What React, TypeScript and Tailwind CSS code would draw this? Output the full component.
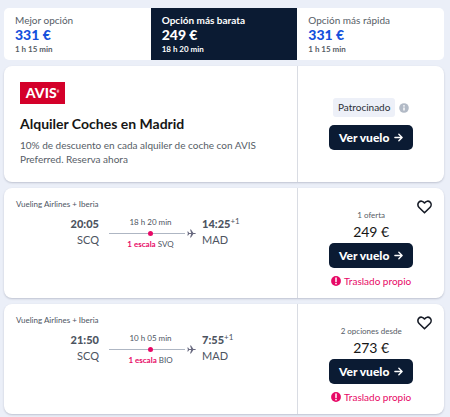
import React from 'react';

type Option = { label: string; price: string; duration: string; active?: boolean };

type Flight = {
  id: number;
  airlines: string;
  departure: string;
  origin: string;
  duration: string;
  stop: string;
  arrival: string;
  destination: string;
  offers: string;
  price: string;
};

const options: Option[] = [
  { label: 'Mejor opción', price: '331 €', duration: '1 h 15 min' },
  { label: 'Opción más barata', price: '249 €', duration: '18 h 20 min', active: true },
  { label: 'Opción más rápida', price: '331 €', duration: '1 h 15 min' },
];

const flights: Flight[] = [
  {
    id: 1,
    airlines: 'Vueling Airlines + Iberia',
    departure: '20:05',
    origin: 'SCQ',
    duration: '18 h 20 min',
    stop: 'SVQ',
    arrival: '14:25',
    destination: 'MAD',
    offers: '1 oferta',
    price: '249 €',
  },
  {
    id: 2,
    airlines: 'Vueling Airlines + Iberia',
    departure: '21:50',
    origin: 'SCQ',
    duration: '10 h 05 min',
    stop: 'BIO',
    arrival: '7:55',
    destination: 'MAD',
    offers: '2 opciones desde',
    price: '273 €',
  },
];

const ArrowIcon = () => (
  <svg className="h-[9px] w-[9px]" viewBox="0 0 10 10" fill="none" stroke="currentColor" strokeWidth="1.5" strokeLinecap="round" strokeLinejoin="round" aria-hidden="true">
    <path d="M1 5h7.8M5.4 1.4 9 5 5.4 8.6" />
  </svg>
);

const InfoIcon = () => (
  <svg className="block h-[10px] w-[10px]" viewBox="0 0 10 10" aria-hidden="true">
    <circle cx="5" cy="5" r="4.8" fill="#b2bac6" />
    <path d="M5 4.6v2.8" stroke="#fff" strokeWidth="1.4" />
    <circle cx="5" cy="2.9" r=".8" fill="#fff" />
  </svg>
);

const AlertIcon = () => (
  <svg className="h-[10px] w-[10px]" viewBox="0 0 10 10" aria-hidden="true">
    <circle cx="5" cy="5" r="4.9" fill="#e70866" />
    <path d="M5 2.1v3.3" stroke="#fff" strokeWidth="1.5" strokeLinecap="round" />
    <circle cx="5" cy="7.6" r=".85" fill="#fff" />
  </svg>
);

const HeartIcon = () => (
  <svg className="block h-[14px] w-[15px]" viewBox="0 0 15 14" fill="none" stroke="#161b26" strokeWidth="1.6" strokeLinejoin="round" aria-hidden="true">
    <path d="M7.5 12.8 2.1 7.5C.5 5.9.5 3.500 1.900 2.100 3.500.6 6 .9 7.500 3 9 .9 11.500.6 13.100 2.100 14.500 3.500 14.500 5.900 12.900 7.500Z" />
  </svg>
);

const PlaneIcon = () => (
  <svg className="h-[9px] w-[9px] shrink-0" viewBox="0 0 9 9" fill="#68697f" aria-hidden="true">
    <path d="M.3 2.400h.8l1.100 1.500h2L3 .4h1l2.400 3.500h1.700c.9 0 .9 1.200 0 1.200H6.400L4 8.600H3l1.200-3.500h-2L1.100 6.600H.3l.6-2.100Z" />
  </svg>
);

const SelectButton = () => (
  <button type="button" className="flex h-[25px] items-center gap-[5px] rounded-[5px] bg-[#0b1b33] px-2.5 text-[12px] leading-4 font-black text-white">
    Ver vuelo
    <ArrowIcon />
  </button>
);

const Card = ({ children }: { children: React.ReactNode }) => (
  <article className="grid grid-cols-[2fr_1fr] rounded-lg bg-white shadow-[0_1px_2px_rgba(30,40,70,0.22)]">
    {children}
  </article>
);

const SponsoredCard = () => (
  <Card>
    <div className="p-4">
      <div className="flex h-[22px] w-[45px] items-center justify-center bg-[#d4002a] text-[14px] leading-none font-black text-white">
        AVIS<sup className="text-[3px]">®</sup>
      </div>
      <h2 className="mt-3 text-[14px] leading-4 font-bold text-[#161616]">Alquiler Coches en Madrid</h2>
      <p className="mt-1.5 text-[10px] leading-[14px] text-[#565d66]">
        10% de descuento en cada alquiler de coche con AVIS Preferred. Reserva ahora
      </p>
    </div>
    <div className="flex flex-col items-center justify-center gap-2 border-l border-[#d9dce3]">
      <div className="flex items-center gap-1">
        <span className="rounded-[3px] bg-[#edf0f8] px-[5px] text-[10px] leading-[19px] text-[#2b2f36]">Patrocinado</span>
        <button type="button" aria-label="Información">
          <InfoIcon />
        </button>
      </div>
      <SelectButton />
    </div>
  </Card>
);

const FlightCard = ({ flight }: { flight: Flight }) => (
  <Card>
    <div className="px-3 py-2.5 text-[#4d545f]">
      <p className="text-[8px] leading-3">{flight.airlines}</p>
      <div className="mt-1.5 flex">
        <div className="w-[83px] text-right">
          <p className="text-[11px] leading-4 font-black">{flight.departure}</p>
          <p className="text-[11px] leading-4">{flight.origin}</p>
        </div>
        <div className="ml-2.5 w-[87px] text-center">
          <p className="pr-1 text-[8px] leading-[13px]">{flight.duration}</p>
          <div className="flex items-center">
            <div className="h-px flex-1 bg-[#aeb6c3]" />
            <span className="h-[5px] w-[5px] rounded-full bg-[#e70866]" />
            <div className="mr-0.5 h-px w-[32px] bg-[#aeb6c3]" />
            <PlaneIcon />
          </div>
          <p className="pr-1 text-[8px] leading-[13px]">
            <span className="font-bold text-[#e70866]">1 escala</span> {flight.stop}
          </p>
        </div>
        <div className="ml-1.5">
          <p className="text-[11px] leading-4 font-black">
            {flight.arrival}
            <sup className="text-[8px] leading-none font-normal">+1</sup>
          </p>
          <p className="text-[11px] leading-4">{flight.destination}</p>
        </div>
      </div>
    </div>
    <div className="relative flex flex-col items-center border-l border-[#d9dce3] pt-5 pb-2.5">
      <button type="button" aria-label="Guardar vuelo" className="absolute top-3 right-3">
        <HeartIcon />
      </button>
      <p className="text-[8px] leading-[14px] text-[#565d66]">{flight.offers}</p>
      <p className="mb-px text-[14px] leading-5 text-[#161616]">{flight.price}</p>
      <SelectButton />
      <p className="mt-1.5 flex items-center gap-[3px] text-[10px] leading-[14px] text-[#e70866]">
        <AlertIcon />
        Traslado propio
      </p>
    </div>
  </Card>
);

const App = () => (
  <main className="flex min-h-screen flex-col gap-1.5 bg-[#ebeff8] pt-2 pr-1.5 pb-0.5 pl-1 font-[Lato,sans-serif]">
    <nav className="grid grid-cols-3 overflow-hidden rounded-[5px] bg-white">
      {options.map((option) => (
        <button
          key={option.label}
          type="button"
          className={
            option.active
              ? 'bg-[#0b1b33] px-[11px] py-[5px] text-left text-white'
              : 'px-[11px] py-[5px] text-left text-[#565d66]'
          }
        >
          <span className={option.active ? 'block text-[10px] leading-[14px] font-bold' : 'block text-[10px] leading-[14px]'}>
            {option.label}
          </span>
          <span className={option.active ? 'block text-[14px] leading-4 font-black' : 'block text-[14px] leading-4 font-black text-[#1550dc]'}>
            {option.price}
          </span>
          <span className="block text-[8px] leading-3 font-bold">{option.duration}</span>
        </button>
      ))}
    </nav>
    <SponsoredCard />
    {flights.map((flight) => (
      <FlightCard key={flight.id} flight={flight} />
    ))}
  </main>
);

export default App;
